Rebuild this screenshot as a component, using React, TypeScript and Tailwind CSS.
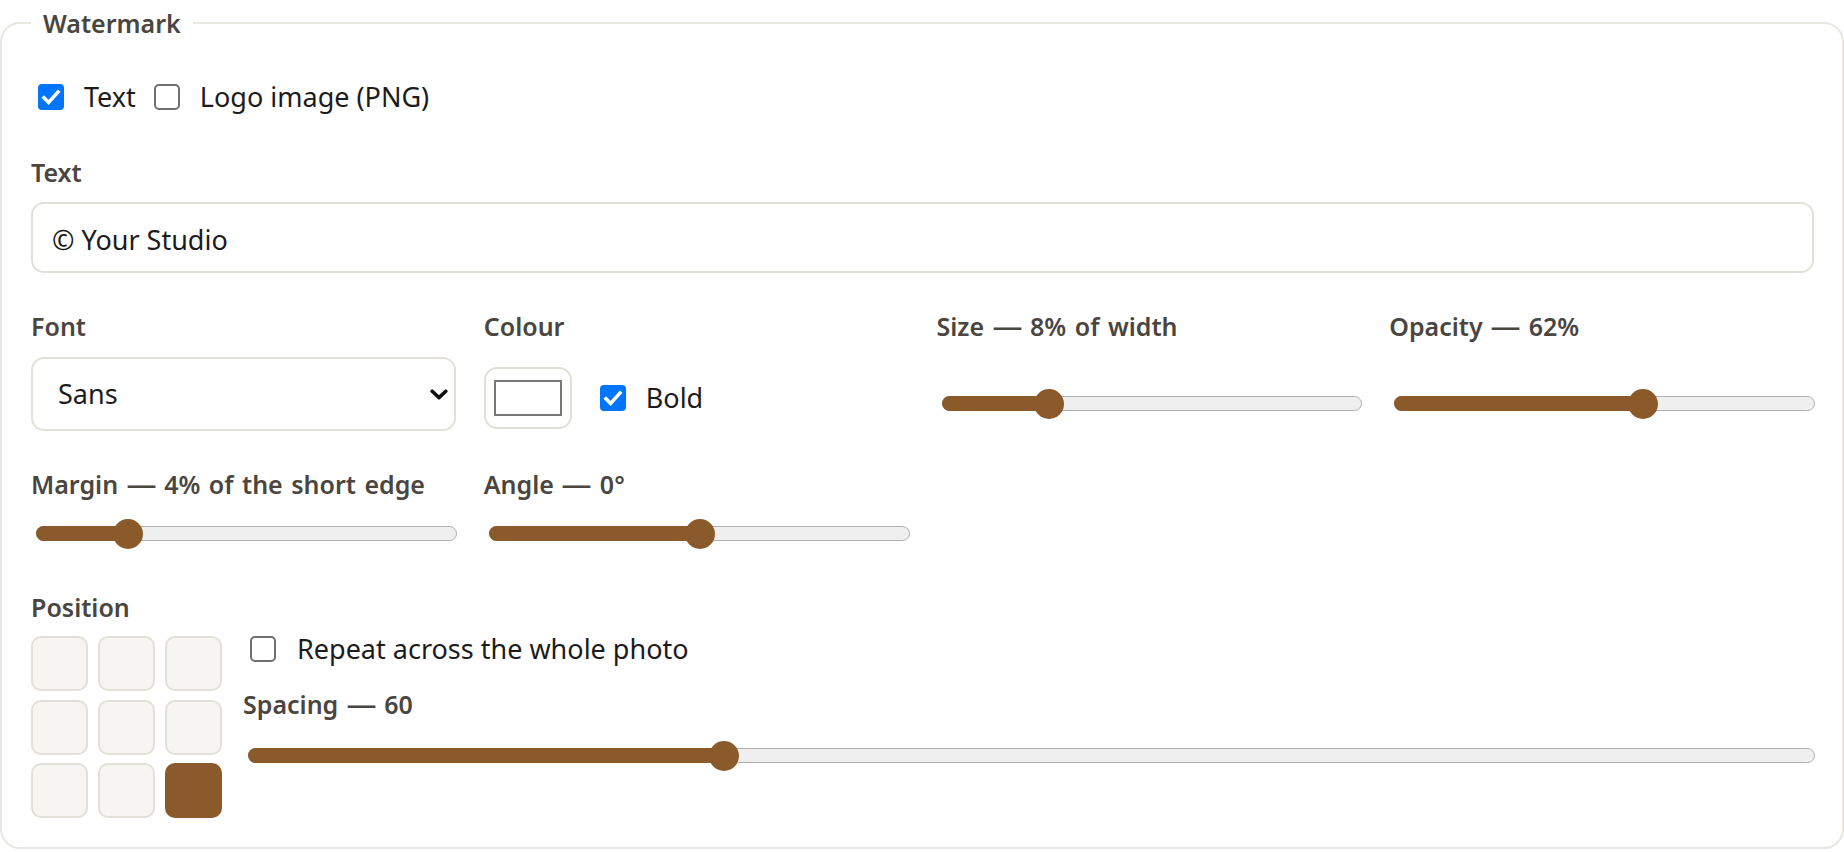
import React from "react";

const LABEL = "block text-[25px] leading-[34px] font-semibold text-[#4a463f] [word-spacing:2px]";
const BODY = "text-[27px] leading-[40px] text-[#1c1c1c]";

function Dash() {
  return <span className="mx-[-1px] inline-block w-[31px] scale-x-[1.2] text-center">—</span>;
}

function Check({ checked }: { checked: boolean }) {
  if (checked) {
    return (
      <span className="flex h-[26px] w-[26px] shrink-0 items-center justify-center rounded-[4px] bg-[#0075ff]">
        <svg viewBox="0 0 26 26" className="h-[26px] w-[26px]">
          <path d="M6 13.8 L10.6 18.4 L20 8" fill="none" stroke="white" strokeWidth="3.6" strokeLinecap="square" />
        </svg>
      </span>
    );
  }
  return <span className="block h-[26px] w-[26px] shrink-0 rounded-[5px] border-2 border-[#6f6f6f] bg-white" />;
}

function Slider({ frac }: { frac: number }) {
  return (
    <div className="relative ml-[5px] mr-[-1px] h-[30px]">
      <div className="absolute left-0 right-0 top-[7px] h-[15px] rounded-full border-[1.5px] border-[#b0b0b0] bg-[#efefef]" />
      <div
        className="absolute left-0 top-[7px] h-[15px] rounded-l-full bg-[#8b5a2b]"
        style={{ width: `calc(15px + (100% - 30px) * ${frac})` }}
      />
      <div
        className="absolute top-0 h-[30px] w-[30px] rounded-full bg-[#8b5a2b]"
        style={{ left: `calc((100% - 30px) * ${frac})` }}
      />
    </div>
  );
}

export default function App() {
  const cells = [0, 1, 2, 3, 4, 5, 6, 7, 8];
  return (
    <div className="h-[852px] w-[1844px] bg-white font-['Noto_Sans','Open_Sans',sans-serif]">
      <fieldset className="m-0 rounded-[20px] border-2 border-[#e9e7e2] pb-[29px] pl-[29px] pr-[28px] pt-0">
        <legend className="px-[12px] text-[25px] leading-[46px] font-semibold text-[#4a463f]">Watermark</legend>

        <div className="mt-[31px] flex h-[40px] items-center">
          <span className="ml-[7px]"><Check checked /></span>
          <span className={`ml-[20px] ${BODY}`}>Text</span>
          <span className="ml-[18px]"><Check checked={false} /></span>
          <span className={`ml-[20px] ${BODY}`}>Logo image (PNG)</span>
        </div>

        <span className={`mt-[38px] ${LABEL}`}>Text</span>
        <input
          readOnly
          defaultValue="© Your Studio"
          className="mt-[13px] block h-[71px] w-full rounded-[13px] border-2 border-[#e3e0d9] bg-white px-[19px] pt-[4px] text-[27px] text-[#1c1c1c] outline-none"
        />

        <div className="mt-[36px] grid grid-cols-4 gap-x-[28px]">
          <div>
            <span className={LABEL}>Font</span>
            <div className="mt-[14px] flex h-[74px] items-center justify-between rounded-[13px] border-2 border-[#e3e0d9] bg-white pl-[25px] pr-[6px]">
              <span className={BODY}>Sans</span>
              <svg viewBox="0 0 18 11" className="h-[11px] w-[18px]">
                <path d="M2.2 2.2 L9 8.6 L15.8 2.2" fill="none" stroke="#111" strokeWidth="3.6" strokeLinecap="round" strokeLinejoin="round" />
              </svg>
            </div>
          </div>
          <div>
            <span className={LABEL}>Colour</span>
            <div className="mt-[24px] flex h-[62px] items-center">
              <div className="flex h-[62px] w-[88px] items-center justify-center rounded-[13px] border-2 border-[#e3e0d9] bg-white">
                <div className="h-[36px] w-[68px] border-2 border-[#777777] bg-white" />
              </div>
              <span className="ml-[28px]"><Check checked /></span>
              <span className={`ml-[20px] ${BODY}`}>Bold</span>
            </div>
          </div>
          <div>
            <span className={LABEL}>Size <Dash /> 8% of width</span>
            <div className="mt-[46px]"><Slider frac={0.238} /></div>
          </div>
          <div>
            <span className={LABEL}>Opacity <Dash /> 62%</span>
            <div className="mt-[46px]"><Slider frac={0.597} /></div>
          </div>
        </div>

        <div className="mt-[36px] grid grid-cols-4 gap-x-[28px]">
          <div>
            <span className={LABEL}>Margin <Dash /> 4% of the short edge</span>
            <div className="mt-[18px]"><Slider frac={0.197} /></div>
          </div>
          <div>
            <span className={LABEL}>Angle <Dash /> 0°</span>
            <div className="mt-[18px]"><Slider frac={0.501} /></div>
          </div>
        </div>

        <span className={`mt-[41px] ${LABEL}`}>Position</span>
        <div className="mt-[12px] flex">
          <div className="grid grid-cols-[repeat(3,57px)] grid-rows-[repeat(3,55px)] gap-x-[10px] gap-y-[8.5px]">
            {cells.map((i) =>
              i === 8 ? (
                <div key={i} className="rounded-[10px] border-2 border-[#8b5a2b] bg-[#8b5a2b]" />
              ) : (
                <div key={i} className="rounded-[10px] border-2 border-[#e3e0d9] bg-[#f6f5f1]" />
              )
            )}
          </div>
          <div className="ml-[21px] flex-1">
            <div className="flex h-[26px] items-center">
              <span className="ml-[7px]"><Check checked={false} /></span>
              <span className={`ml-[21px] ${BODY}`}>Repeat across the whole photo</span>
            </div>
            <span className={`mt-[25px] ${LABEL}`}>Spacing <Dash /> 60</span>
            <div className="mt-[20px]"><Slider frac={0.3} /></div>
          </div>
        </div>
      </fieldset>
    </div>
  );
}
